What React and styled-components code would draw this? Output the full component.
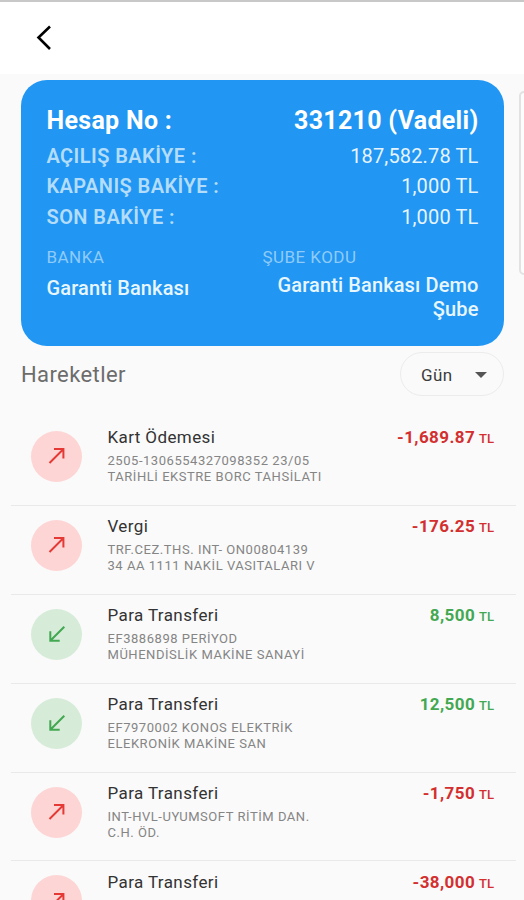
import React from "react";
import styled, { createGlobalStyle } from "styled-components";

const GlobalStyle = createGlobalStyle`
  * {
    box-sizing: border-box;
  }
  body {
    margin: 0;
    background: #fafafa;
    font-family: Roboto, "Liberation Sans", sans-serif;
  }
`;
const Screen = styled.div`
  position: relative;
  height: 900px;
  overflow: hidden;
  background: #fafafa;
`;
const Header = styled.header`
  height: 74px;
  border-top: 2px solid #c8c8c8;
  background: #ffffff;
  padding: 22px 0 0 34px;
`;
const BackButton = styled.button`
  display: block;
  padding: 0;
  border: 0;
  background: none;
`;
const NextCard = styled.div`
  position: absolute;
  top: 91px;
  right: -10px;
  width: 15px;
  height: 184px;
  border: 2px solid #e2e2e2;
  border-radius: 5px;
  background: #fcfcfc;
`;
const Card = styled.section`
  width: 482.5px;
  height: 266px;
  margin: 6px 0 0 21px;
  padding: 24px 25px 0 25.5px;
  border-radius: 26px;
  background: #2196f3;
  color: #ffffff;
`;
const AccountRow = styled.div`
  display: flex;
  justify-content: space-between;
  height: 37px;
  font-size: 25px;
  line-height: 33px;
  font-weight: 700;
  letter-spacing: 0.3px;
`;
const BalanceRow = styled.div`
  display: flex;
  justify-content: space-between;
  height: 30.4px;
  font-size: 20px;
  line-height: 31px;
  letter-spacing: 0.15px;
  color: #e6f4ff;
`;
const BalanceLabel = styled.span`
  font-weight: 600;
  letter-spacing: 0.42px;
  color: #b3ddfb;
`;
const BankRow = styled.div`
  display: flex;
  justify-content: space-between;
  padding-top: 12.8px;
`;
const BankColumn = styled.div`
  width: ${(props) => props.$width};
`;
const BankLabel = styled.div`
  font-size: 17px;
  line-height: 24px;
  letter-spacing: 0.45px;
  color: #8fcbf9;
`;
const BankName = styled.div`
  padding-top: ${(props) => props.$top};
  font-size: 20px;
  line-height: 24px;
  font-weight: 500;
  letter-spacing: 0.12px;
  text-align: ${(props) => props.$align || "left"};
  color: #e8f6ff;
`;
const ListHeader = styled.div`
  display: flex;
  justify-content: space-between;
  align-items: center;
  height: 44px;
  margin: 6px 20px 0 21px;
`;
const ListTitle = styled.h2`
  margin: 0;
  font-size: 22px;
  font-weight: 400;
  letter-spacing: 0.4px;
  color: #6c6c6c;
`;
const PeriodSelect = styled.button`
  display: flex;
  align-items: center;
  justify-content: space-between;
  width: 104px;
  height: 44px;
  padding: 1px 15px 0 20px;
  border: 1px solid #ececec;
  border-radius: 22px;
  background: #fafafa;
  font-family: inherit;
  font-size: 17px;
  letter-spacing: 0.4px;
  color: #3c3c3c;
`;
const List = styled.div`
  margin: 21px 8px 0 11px;
`;
const Row = styled.div`
  display: flex;
  height: 88.9px;
  padding: 10.4px 22px 0 20px;
  border-bottom: 1px solid #e9e9e9;
`;
const Badge = styled.div`
  display: flex;
  align-items: center;
  justify-content: center;
  width: 51px;
  height: 51px;
  margin-top: 3.6px;
  border-radius: 50%;
  background: ${(props) => (props.$income ? "#d6ecd8" : "#fdd5d4")};
`;
const Info = styled.div`
  flex: 1;
  padding-left: 25.5px;
`;
const Title = styled.div`
  font-size: 17px;
  line-height: 20px;
  letter-spacing: 0.4px;
  color: #333333;
`;
const Detail = styled.div`
  padding-top: 5.6px;
  font-size: 13px;
  line-height: 16px;
  letter-spacing: 0.54px;
  white-space: pre;
  color: #858585;
`;
const Amount = styled.div`
  font-size: 17px;
  line-height: 20px;
  font-weight: 700;
  letter-spacing: 0.4px;
  color: ${(props) => (props.$income ? "#43a852" : "#d32f2f")};
`;
const Currency = styled.span`
  margin-left: 4px;
  font-size: 13px;
  font-weight: 500;
  letter-spacing: 0;
`;

const BackIcon = () => (
  <svg width="20" height="28" viewBox="0 0 20 28" fill="none">
    <path d="M16 2.5L4.5 13.5L16 25" stroke="#000" strokeWidth="2.6" />
  </svg>
);
const CaretIcon = () => (
  <svg width="14" height="8" viewBox="0 0 14 8">
    <path d="M1 1H13L7 7Z" fill="#555" />
  </svg>
);
const OutIcon = () => (
  <svg width="20" height="20" viewBox="0 0 20 20" fill="none">
    <path d="M2.5 17L16 3.5M7 3.1H16.4V12.5" stroke="#e53935" strokeWidth="2" />
  </svg>
);
const InIcon = () => (
  <svg width="20" height="20" viewBox="0 0 20 20" fill="none">
    <path d="M17.3 2.7L3.8 16.2M3.3 7.3V16.7H12.7" stroke="#43a852" strokeWidth="2" />
  </svg>
);

const transactions = [
  {
    title: "Kart Ödemesi",
    detail: "2505-1306554327098352 23/05\nTARİHLİ EKSTRE BORC TAHSİLATI",
    amount: "-1,689.87",
  },
  {
    title: "Vergi",
    detail: "TRF.CEZ.THS. INT- ON00804139\n34 AA 1111 NAKİL VASITALARI V",
    amount: "-176.25",
  },
  {
    title: "Para Transferi",
    detail: "EF3886898 PERİYOD\nMÜHENDİSLİK MAKİNE SANAYİ",
    amount: "8,500",
    income: true,
  },
  {
    title: "Para Transferi",
    detail: "EF7970002 KONOS ELEKTRİK\nELEKRONİK MAKİNE SAN",
    amount: "12,500",
    income: true,
  },
  {
    title: "Para Transferi",
    detail: "INT-HVL-UYUMSOFT RİTİM DAN.\nC.H. ÖD.",
    amount: "-1,750",
  },
  {
    title: "Para Transferi",
    amount: "-38,000",
  },
];

const App = () => {
  return (
    <Screen>
      <GlobalStyle />
      <Header>
        <BackButton>
          <BackIcon />
        </BackButton>
      </Header>
      <NextCard />
      <Card>
        <AccountRow>
          <span>Hesap No :</span>
          <span>331210 (Vadeli)</span>
        </AccountRow>
        <BalanceRow>
          <BalanceLabel>AÇILIŞ BAKİYE :</BalanceLabel>
          <span>187,582.78 TL</span>
        </BalanceRow>
        <BalanceRow>
          <BalanceLabel>KAPANIŞ BAKİYE :</BalanceLabel>
          <span>1,000 TL</span>
        </BalanceRow>
        <BalanceRow>
          <BalanceLabel>SON BAKİYE :</BalanceLabel>
          <span>1,000 TL</span>
        </BalanceRow>
        <BankRow>
          <BankColumn $width="200px">
            <BankLabel>BANKA</BankLabel>
            <BankName $top="7.5px">Garanti Bankası</BankName>
          </BankColumn>
          <BankColumn $width="216px">
            <BankLabel>ŞUBE KODU</BankLabel>
            <BankName $top="4.4px" $align="right">
              Garanti Bankası Demo Şube
            </BankName>
          </BankColumn>
        </BankRow>
      </Card>
      <ListHeader>
        <ListTitle>Hareketler</ListTitle>
        <PeriodSelect>
          Gün
          <CaretIcon />
        </PeriodSelect>
      </ListHeader>
      <List>
        {transactions.map((item, index) => (
          <Row key={index}>
            <Badge $income={item.income}>
              {item.income ? <InIcon /> : <OutIcon />}
            </Badge>
            <Info>
              <Title>{item.title}</Title>
              {item.detail && <Detail>{item.detail}</Detail>}
            </Info>
            <Amount $income={item.income}>
              {item.amount}
              <Currency>TL</Currency>
            </Amount>
          </Row>
        ))}
      </List>
    </Screen>
  );
};

export default App;
